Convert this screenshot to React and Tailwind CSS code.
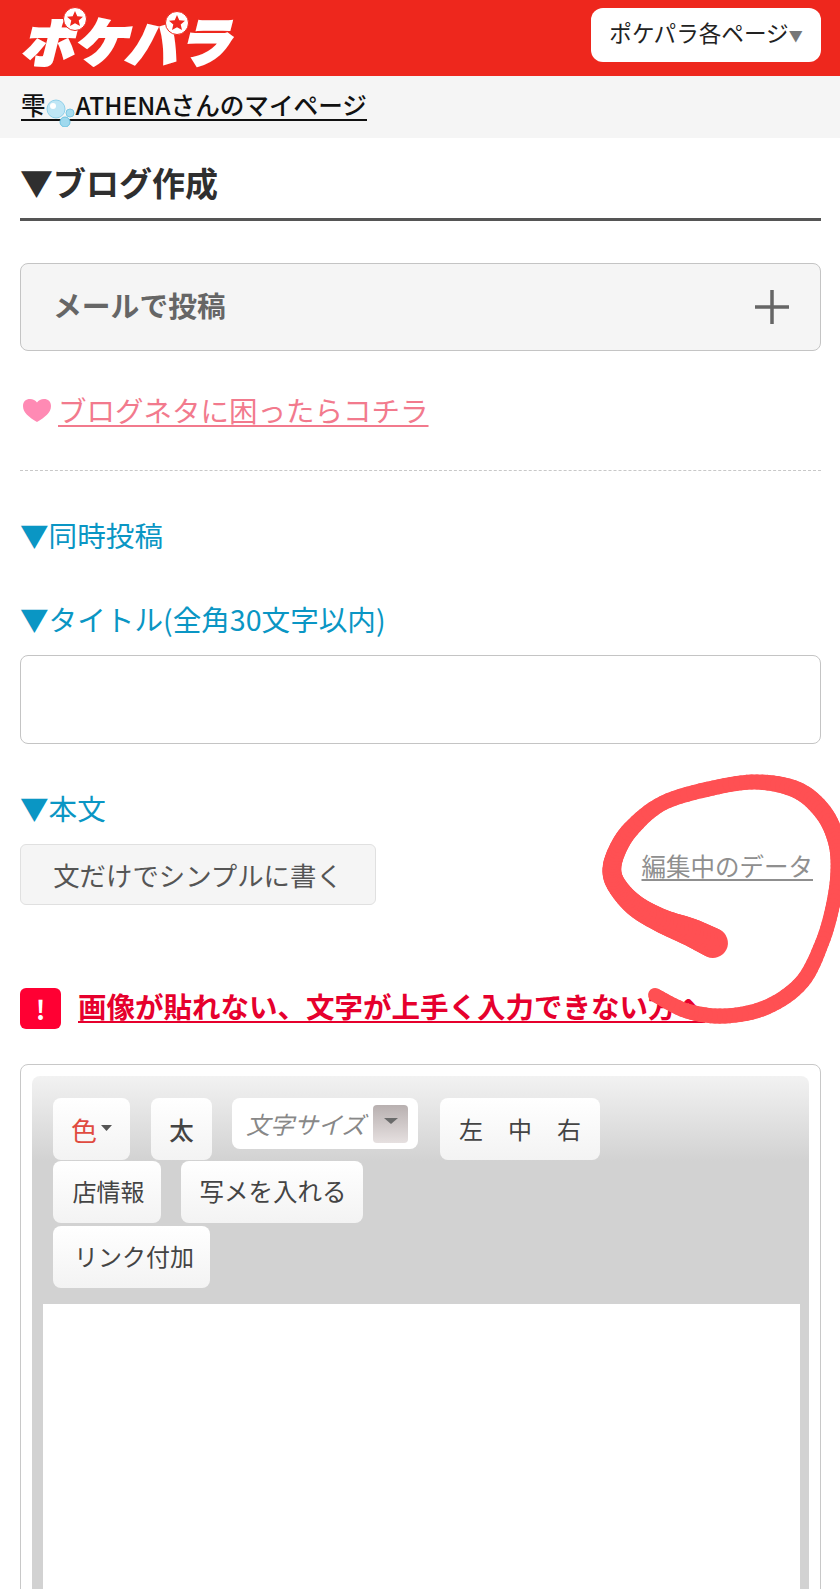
const FONT = { fontFamily: '"Noto Sans CJK JP", "Noto Sans", sans-serif' };

// hand-drawn red circle: centre line points [x, y, width]
const SCRIBBLE = [
  [713, 943, 30], [690, 932, 28], [662, 921, 24], [637, 907, 22], [620, 890, 20], [612, 873, 19], [616, 853, 18],
  [631, 829, 17], [663, 803, 15], [713, 788, 15], [757, 782, 15], [797, 790, 17], [823, 812, 18], [836, 840, 17],
  [838, 870, 15], [833, 905, 14], [822, 943, 14], [802, 982, 15], [767, 1007, 15], [725, 1016, 15], [687, 1011, 15], [655, 995, 14],
];

function interpolate(points) {
  const out = [];
  for (let i = 0; i < points.length - 1; i++) {
    const p0 = points[Math.max(i - 1, 0)];
    const p1 = points[i];
    const p2 = points[i + 1];
    const p3 = points[Math.min(i + 2, points.length - 1)];
    for (let s = 0; s < 8; s++) {
      const t = s / 8;
      out.push(
        [0, 1, 2].map(
          (k) =>
            0.5 *
            (2 * p1[k] +
              (p2[k] - p0[k]) * t +
              (2 * p0[k] - 5 * p1[k] + 4 * p2[k] - p3[k]) * t * t +
              (3 * p1[k] - p0[k] - 3 * p2[k] + p3[k]) * t * t * t)
        )
      );
    }
  }
  out.push(points[points.length - 1]);
  return out;
}

function Scribble() {
  const pts = interpolate(SCRIBBLE);
  return (
    <svg className="absolute left-0 top-0 pointer-events-none" width="840" height="1589">
      {pts.slice(1).map((p, i) => (
        <line key={i} x1={pts[i][0]} y1={pts[i][1]} x2={p[0]} y2={p[1]} stroke="#ff5053" strokeWidth={p[2]} strokeLinecap="round" />
      ))}
    </svg>
  );
}

function Star({ className }) {
  return (
    <svg className={className} width="24" height="24" viewBox="0 0 24 24">
      <circle cx="12" cy="12" r="11.500" fill="#fff" stroke="#ee271d" strokeWidth="1" />
      <path d="M12 4l2.300 5.200 5.700.6-4.300 3.700 1.300 5.600L12 16.200l-5 2.900 1.300-5.600L4 9.800l5.700-.6z" fill="#ee271d" />
    </svg>
  );
}

function Logo() {
  return (
    <div className="relative w-[214px] h-[76px]">
      <span className="absolute left-[0px] top-[6px] text-[52px] leading-[68px] font-black italic text-white tracking-[1px] whitespace-nowrap [-webkit-text-stroke:3px_white]">
        ポケパラ
      </span>
      <Star className="absolute left-[42px] top-[7px]" />
      <Star className="absolute left-[144px] top-[11px]" />
    </div>
  );
}

function Bubbles() {
  return (
    <svg className="inline-block align-[-4px] my-[-8px]" width="30" height="28" viewBox="0 0 30 28">
      <circle cx="10" cy="10" r="9" fill="#bfe6f5" stroke="#8fd0ea" />
      <circle cx="7" cy="7" r="3" fill="#fff" />
      <circle cx="24" cy="14" r="4" fill="#a6dcef" stroke="#7cc8e4" />
      <circle cx="19" cy="23" r="5" fill="#9fd9ee" stroke="#6cc2e0" />
    </svg>
  );
}

function Heart() {
  return (
    <svg className="blur-[0.6px]" width="34" height="26" viewBox="0 0 34 26">
      <path d="M17 25C9 20 3 16 3 9 3 4.500 6 2 10 2c3 0 5.500 1.200 7 3.500C18.500 3.200 21 2 24 2c4 0 7 2.500 7 7C31 16 25 20 17 25z" fill="#ff8ab4" />
    </svg>
  );
}

function ToolButton({ children, className = '' }) {
  return (
    <div className={`flex items-center justify-center h-[62px] rounded-[8px] bg-gradient-to-b from-white to-[#f3f3f3] text-[24.500px] text-[#444] ${className}`}>
      {children}
    </div>
  );
}

function SectionLabel({ children, className = '' }) {
  return <p className={`text-[28.600px] leading-[40px] text-[#0a96c4] ${className}`}>{children}</p>;
}

export default function App() {
  return (
    <div style={FONT} className="relative w-[840px] h-[1589px] overflow-hidden bg-white">
      <header className="flex items-start justify-between h-[76px] bg-[#ee271d] pl-[21px] pr-[19px]">
        <Logo />
        <div className="flex items-center justify-center w-[230px] h-[54px] mt-[8px] pb-[4px] rounded-[12px] bg-white text-[22.600px] text-[#222]">
          ポケパラ各ページ<span className="mt-[4px] text-[14px] text-[#777]">▼</span>
        </div>
      </header>

      <div className="h-[62px] bg-[#f5f5f5] pl-[21px] pt-[16px]">
        <a className="inline-block border-b-2 border-[#111] text-[24.600px] leading-[24px] font-medium text-[#111]">
          雫<Bubbles />ATHENAさんのマイページ
        </a>
      </div>

      <main className="pl-[20px] pr-[19px]">
        <h1 className="h-[83px] pt-[21px] border-b-[3px] border-[#555] text-[33px] leading-[46px] font-bold text-[#2f2f2f]">
          ▼ブログ作成
        </h1>

        <div className="flex items-center justify-between h-[88px] mt-[42px] pl-[32px] pr-[30px] pb-[5px] rounded-[8px] border border-[#c4c4c4] bg-[#f5f5f5]">
          <span className="text-[28.800px] font-bold text-[#666]">メールで投稿</span>
          <svg className="mt-[5px]" width="36" height="36" viewBox="0 0 36 36">
            <path d="M18 1v34M1 18h34" stroke="#666" strokeWidth="3.500" fill="none" />
          </svg>
        </div>

        <div className="flex items-center h-[40px] mt-[39px]">
          <Heart />
          <a className="ml-[4px] text-[28.500px] leading-[40px] text-[#f27a8d] underline underline-offset-[3px]">ブログネタに困ったらコチラ</a>
        </div>

        <div className="mt-[40px] border-t border-dashed border-[#c8c8c8]" />

        <SectionLabel className="mt-[44px]">▼同時投稿</SectionLabel>
        <SectionLabel className="mt-[44px]">▼タイトル(全角30文字以内)</SectionLabel>
        <div className="h-[89px] mt-[16px] rounded-[8px] border border-[#c4c4c4] bg-white" />

        <SectionLabel className="mt-[44px]">▼本文</SectionLabel>
        <div className="flex items-center justify-between mt-[16px]">
          <div className="flex items-center justify-center w-[356px] h-[61px] rounded-[6px] border border-[#e0e0e0] bg-[#f5f5f5] text-[26.400px] text-[#555]">
            文だけでシンプルに書く
          </div>
          <a className="mr-[8px] mt-[-16px] text-[24.500px] text-[#8f8f8f] underline underline-offset-[3px]">編集中のデータ</a>
        </div>

        <div className="flex items-center mt-[83px]">
          <div className="flex items-center justify-center w-[41px] h-[41px] rounded-[6px] bg-[#ff0033] text-[26px] font-bold text-white">!</div>
          <a className="ml-[17px] mt-[-6px] text-[28.500px] leading-[40px] font-bold text-[#e6002d] underline underline-offset-[3px] whitespace-nowrap">
            画像が貼れない、文字が上手く入力できない方へ
          </a>
        </div>

        <div className="h-[600px] mt-[35px] px-[11px] pt-[11px] rounded-[8px] border border-[#c8c8c8] bg-white">
          <div className="h-full rounded-t-[8px] bg-[linear-gradient(#f2f2f2,#d2d2d2_85px)]">
            <div className="h-[228px] pl-[21px] pt-[22px]">
              <div className="flex items-start">
                <ToolButton className="w-[77px] text-[#e04b40]">
                  <span className="text-[26px]">色</span>
                  <svg className="ml-[4px] mt-[-3px]" width="11" height="6" viewBox="0 0 11 6">
                    <path d="M0 0h11L5.500 6z" fill="#555" />
                  </svg>
                </ToolButton>
                <ToolButton className="w-[61px] ml-[21px] pt-[3px] font-medium">太</ToolButton>
                <div className="flex items-center w-[186px] h-[51px] ml-[20px] pl-[14px] rounded-[8px] bg-white text-[24px] italic text-[#888]">
                  文字サイズ
                  <div className="flex items-center justify-center w-[35px] h-[38px] ml-[8px] rounded-[4px] bg-gradient-to-b from-[#b8b0b0] to-[#e6e0e0]">
                    <svg className="mt-[-6px]" width="14" height="6" viewBox="0 0 14 6">
                      <path d="M0 0h14L7 6z" fill="#6a6a6a" />
                    </svg>
                  </div>
                </div>
                <ToolButton className="w-[160px] ml-[22px] gap-[25px] text-[24px]">
                  <span>左</span>
                  <span>中</span>
                  <span>右</span>
                </ToolButton>
              </div>
              <div className="flex mt-[1px]">
                <ToolButton className="w-[108px] pl-[3px] pb-[2px] text-[24px]">店情報</ToolButton>
                <ToolButton className="w-[182px] ml-[20px] pl-[2px] pb-[2px]">写メを入れる</ToolButton>
              </div>
              <ToolButton className="w-[157px] mt-[3px] pl-[5px] pb-[2px] text-[24px]">リンク付加</ToolButton>
            </div>
            <div className="h-full ml-[11px] mr-[9px] bg-white" />
          </div>
        </div>
      </main>

      <Scribble />
    </div>
  );
}
